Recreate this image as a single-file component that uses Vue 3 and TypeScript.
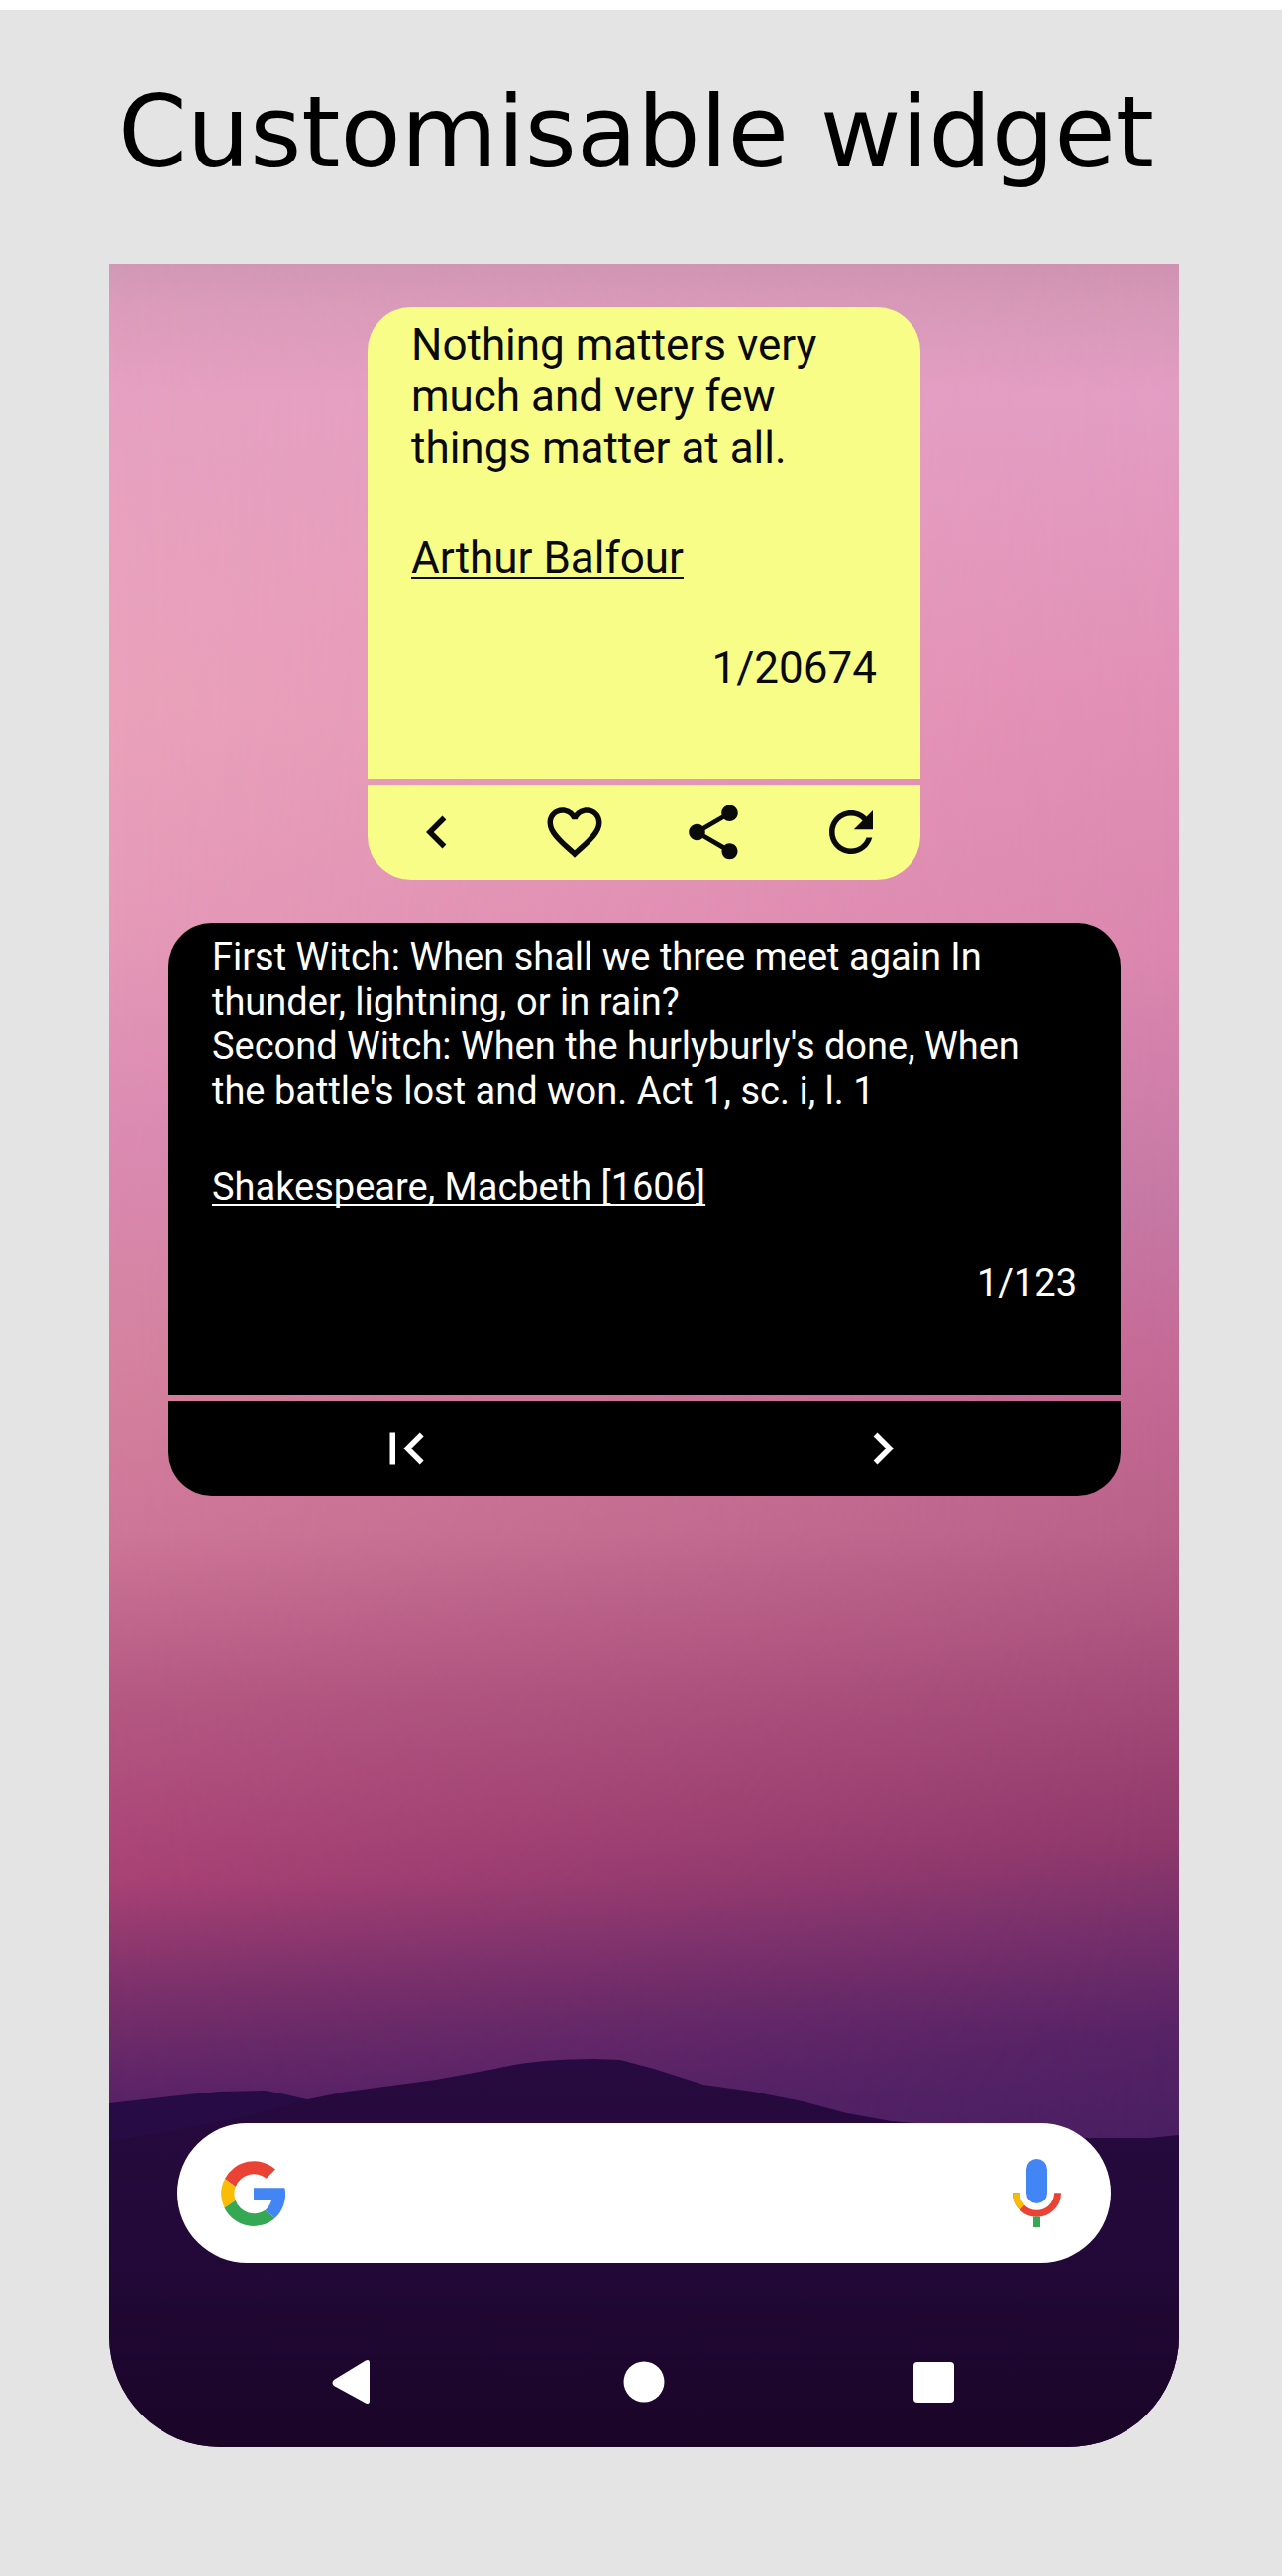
<script setup lang="ts">
interface Action {
  label: string
  path: string
}

interface Widget {
  theme: string
  lines: string[]
  author: string
  position: string
  actions: Action[]
}

const widgets: Widget[] = [
  {
    theme: 'note',
    lines: ['Nothing matters very much and very few things matter at all.'],
    author: 'Arthur Balfour',
    position: '1/20674',
    actions: [
      { label: 'Previous quotation', path: 'M15.41 7.41 14 6l-6 6 6 6 1.41-1.41L10.83 12z' },
      {
        label: 'Favourite',
        path: 'M16.5 3c-1.74 0-3.41.81-4.5 2.09C10.91 3.81 9.24 3 7.5 3 4.42 3 2 5.42 2 8.5c0 3.78 3.4 6.86 8.55 11.54L12 21.35l1.45-1.32C18.6 15.36 22 12.28 22 8.5 22 5.42 19.58 3 16.5 3zm-4.4 15.55-.1.1-.1-.1C7.14 14.24 4 11.39 4 8.5 4 6.5 5.5 5 7.5 5c1.54 0 3.04.99 3.57 2.36h1.87C13.46 5.99 14.96 5 16.5 5c2 0 3.5 1.5 3.5 3.5 0 2.89-3.14 5.74-7.9 10.05z',
      },
      {
        label: 'Share',
        path: 'M18 16.08c-.76 0-1.44.3-1.96.77L8.91 12.7c.05-.23.09-.46.09-.7s-.04-.47-.09-.7l7.05-4.11c.54.5 1.25.81 2.04.81 1.66 0 3-1.34 3-3s-1.34-3-3-3-3 1.34-3 3c0 .24.04.47.09.7L8.04 9.81C7.5 9.31 6.79 9 6 9c-1.66 0-3 1.34-3 3s1.34 3 3 3c.79 0 1.5-.31 2.04-.81l7.12 4.16c-.05.21-.08.43-.08.65 0 1.61 1.31 2.92 2.92 2.92s2.92-1.31 2.92-2.92-1.31-2.92-2.92-2.92z',
      },
      {
        label: 'Random quotation',
        path: 'M17.65 6.35C16.2 4.9 14.21 4 12 4c-4.42 0-7.99 3.58-7.99 8s3.57 8 7.99 8c3.73 0 6.84-2.55 7.73-6h-2.08c-.82 2.33-3.04 4-5.65 4-3.31 0-6-2.69-6-6s2.69-6 6-6c1.66 0 3.14.69 4.22 1.78L13 11h7V4l-2.35 2.35z',
      },
    ],
  },
  {
    theme: 'night',
    lines: [
      'First Witch: When shall we three meet again In thunder, lightning, or in rain?',
      "Second Witch: When the hurlyburly's done, When the battle's lost and won. Act 1, sc. i, l. 1",
    ],
    author: 'Shakespeare, Macbeth [1606]',
    position: '1/123',
    actions: [
      { label: 'First quotation', path: 'M18.41 16.59 13.82 12l4.59-4.59L17 6l-6 6 6 6zM6 6h2v12H6z' },
      { label: 'Next quotation', path: 'M10 6 8.59 7.41 13.17 12l-4.58 4.59L10 18l6-6z' },
    ],
  },
]
</script>

<template>
  <main class="page">
    <h1 class="title">Customisable widget</h1>

    <section class="phone">
      <svg class="wallpaper" viewBox="0 0 1080 2204" preserveAspectRatio="none" aria-hidden="true">
        <defs>
          <linearGradient id="sky-left" x1="0" y1="0" x2="0" y2="2204" gradientUnits="userSpaceOnUse">
            <stop offset="0" stop-color="#d199b5" />
            <stop offset="0.02" stop-color="#dc9cba" />
            <stop offset="0.06" stop-color="#e7a1c1" />
            <stop offset="0.2" stop-color="#eaa2ba" />
            <stop offset="0.3" stop-color="#e69ab8" />
            <stop offset="0.4" stop-color="#db8bb2" />
            <stop offset="0.5" stop-color="#d5839f" />
            <stop offset="0.58" stop-color="#cf7798" />
            <stop offset="0.66" stop-color="#b45882" />
            <stop offset="0.74" stop-color="#a94275" />
            <stop offset="0.79" stop-color="#7d316b" />
            <stop offset="0.84" stop-color="#5a2367" />
            <stop offset="1" stop-color="#4a2060" />
          </linearGradient>
          <linearGradient id="sky-right" x1="0" y1="0" x2="0" y2="2204" gradientUnits="userSpaceOnUse">
            <stop offset="0" stop-color="#cf92b1" />
            <stop offset="0.02" stop-color="#d698b8" />
            <stop offset="0.06" stop-color="#e39dc3" />
            <stop offset="0.2" stop-color="#e18fb5" />
            <stop offset="0.32" stop-color="#da86ae" />
            <stop offset="0.43" stop-color="#c578a4" />
            <stop offset="0.5" stop-color="#c56996" />
            <stop offset="0.58" stop-color="#b96189" />
            <stop offset="0.66" stop-color="#a34977" />
            <stop offset="0.72" stop-color="#90396c" />
            <stop offset="0.77" stop-color="#702d6a" />
            <stop offset="0.81" stop-color="#572366" />
            <stop offset="0.86" stop-color="#491f62" />
            <stop offset="1" stop-color="#401b58" />
          </linearGradient>
          <linearGradient id="fade" x1="0" y1="0" x2="1" y2="0">
            <stop offset="0" stop-color="#000" />
            <stop offset="1" stop-color="#fff" />
          </linearGradient>
          <linearGradient id="ground" x1="0" y1="0" x2="0" y2="1">
            <stop offset="0" stop-color="#270a3f" />
            <stop offset="0.45" stop-color="#23093a" />
            <stop offset="1" stop-color="#1a0527" />
          </linearGradient>
          <mask id="from-left">
            <rect width="1080" height="2204" fill="url(#fade)" />
          </mask>
        </defs>
        <rect width="1080" height="2204" fill="url(#sky-left)" />
        <rect width="1080" height="2204" fill="url(#sky-right)" mask="url(#from-left)" />
        <path fill="#260b45" d="M0 1857 35 1853 90 1847 112 1845 158 1844 178 1848 200 1853 240 1900H0z" />
        <path
          fill="url(#ground)"
          d="M0 1895 60 1885 130 1872 200 1853 240 1845 330 1833 390 1822Q430 1812 490 1812L516 1813 550 1822 600 1838 650 1845 700 1855 745 1867 790 1875 850 1880 940 1890 990 1892 1050 1892 1080 1889V2204H0z"
        />
      </svg>

      <article v-for="w in widgets" :key="w.theme" class="widget" :class="w.theme">
        <div class="quote">
          <div class="text">
            <p v-for="line in w.lines" :key="line">{{ line }}</p>
          </div>
          <a class="author" href="#">{{ w.author }}</a>
          <p class="position">{{ w.position }}</p>
        </div>
        <div class="actions">
          <button v-for="a in w.actions" :key="a.label" type="button" :aria-label="a.label">
            <svg class="icon" viewBox="0 0 24 24" aria-hidden="true"><path :d="a.path" /></svg>
          </button>
        </div>
      </article>

      <form class="search" role="search" @submit.prevent>
        <svg class="google" viewBox="0 0 65 66" aria-hidden="true">
          <path fill="#ea4335" d="M4 18A33 33 0 0 1 55 8.5L45.7 17.8A19.8 19.8 0 0 0 14.7 26z" />
          <path fill="#fbbc05" d="M4 18A33 33 0 0 0 3.5 47.5L14.7 40A19.8 19.8 0 0 1 14.7 26z" />
          <path fill="#34a853" d="M3.5 47.5A33 33 0 0 0 54.5 58L44.7 49.7A19.8 19.8 0 0 1 14.7 40z" />
          <path fill="#4285f4" d="M33 27.3H64.4A33 33 0 0 1 54.5 58L44.7 49.7A19.8 19.8 0 0 0 51 40H33z" />
        </svg>
        <input type="search" aria-label="Search" />
        <button type="button" aria-label="Voice search">
          <svg class="mic" viewBox="0 0 49 69" aria-hidden="true">
            <rect x="14" width="21" height="45" rx="10.5" fill="#4285f4" />
            <path d="M3.5 34.3a21 21 0 0 0 42 0" fill="none" stroke="#ea4335" stroke-width="7" />
            <path d="M3.5 34.3a21 21 0 0 0 6.5 14.7" fill="none" stroke="#fbbc05" stroke-width="7" />
            <path d="M21 58.5h7V69h-7z" fill="#34a853" />
          </svg>
        </button>
      </form>

      <nav class="system">
        <button type="button" aria-label="Back">
          <svg viewBox="0 0 48 48" aria-hidden="true">
            <path d="M4 22 36 2.500Q39.500 1 40 4V44Q39.500 47 36 45.500L4 28Q1 25 4 22z" />
          </svg>
        </button>
        <button type="button" aria-label="Home">
          <svg viewBox="0 0 48 48" aria-hidden="true"><circle cx="24" cy="24" r="20.5" /></svg>
        </button>
        <button type="button" aria-label="Recent apps">
          <svg viewBox="0 0 48 48" aria-hidden="true"><rect x="3" y="4" width="41" height="41" rx="4" /></svg>
        </button>
      </nav>
    </section>
  </main>
</template>

<style>
body {
  background: #fff;
}
</style>

<style scoped>
.page {
  display: flex;
  flex-direction: column;
  box-sizing: border-box;
  min-height: calc(100vh - 10px);
  margin: 10px 6px 0 0;
  padding: 60px 104px 130px 110px;
  background: #e4e4e4;
}

.title {
  margin: 0 -20px 68px;
  padding-right: 16px;
  color: #000;
  font: 400 100px/128px "DejaVu Sans", sans-serif;
  text-align: center;
}

.phone {
  position: relative;
  z-index: 0;
  display: flex;
  flex: 1;
  flex-direction: column;
  gap: 44px;
  padding-top: 44px;
  overflow: hidden;
  border-radius: 0 0 112px 112px;
  font-family: Roboto, sans-serif;
}

.wallpaper {
  position: absolute;
  inset: 0;
  z-index: -1;
  width: 100%;
  height: 100%;
}

button {
  display: flex;
  align-items: center;
  justify-content: center;
  padding: 0;
  border: 0;
  background: none;
  color: inherit;
  cursor: pointer;
}

svg {
  fill: currentColor;
}

.widget {
  display: flex;
  flex-direction: column;
  gap: 6px;
}

.note {
  --card: #f8fd87;
  width: 558px;
  max-width: 100%;
  margin: 0 auto;
  color: #0a0a0a;
  font-size: 44px;
  line-height: 52px;
}

.night {
  --card: #000;
  margin: 0 59px 0 60px;
  color: #fff;
  font-size: 38px;
  line-height: 45px;
}

.quote {
  display: flex;
  flex-direction: column;
  box-sizing: border-box;
  min-height: 476px;
  gap: 59px;
  padding: 12px 44px;
  border-radius: 44px 44px 0 0;
  background: var(--card);
}

.night .quote {
  gap: 52px;
}

.quote p {
  margin: 0;
}

.author {
  align-self: flex-start;
  color: inherit;
  text-decoration-thickness: 2px;
  text-underline-offset: 4px;
  text-decoration-skip-ink: none;
}

.position {
  text-align: right;
}

.actions {
  display: flex;
  height: 96px;
  border-radius: 0 0 44px 44px;
  background: var(--card);
}

.actions button {
  flex: 1;
}

.icon {
  width: 66px;
  height: 66px;
}

.search {
  display: flex;
  align-items: center;
  height: 141px;
  margin: auto 69px 0;
  border-radius: 71px;
  background: #fff;
}

.google {
  width: 65px;
  height: 66px;
  margin-left: 44px;
}

.search input {
  flex: 1;
  min-width: 0;
  height: 100%;
  border: 0;
  outline: 0;
  background: none;
  font: 38px/45px Roboto, sans-serif;
}

.mic {
  width: 49px;
  height: 69px;
  margin-right: 50px;
}

.system {
  display: flex;
  height: 132px;
  margin: 10px 100px 0;
  color: #fff;
}

.system button {
  flex: 1;
}

.system svg {
  width: 48px;
  height: 48px;
}
</style>
